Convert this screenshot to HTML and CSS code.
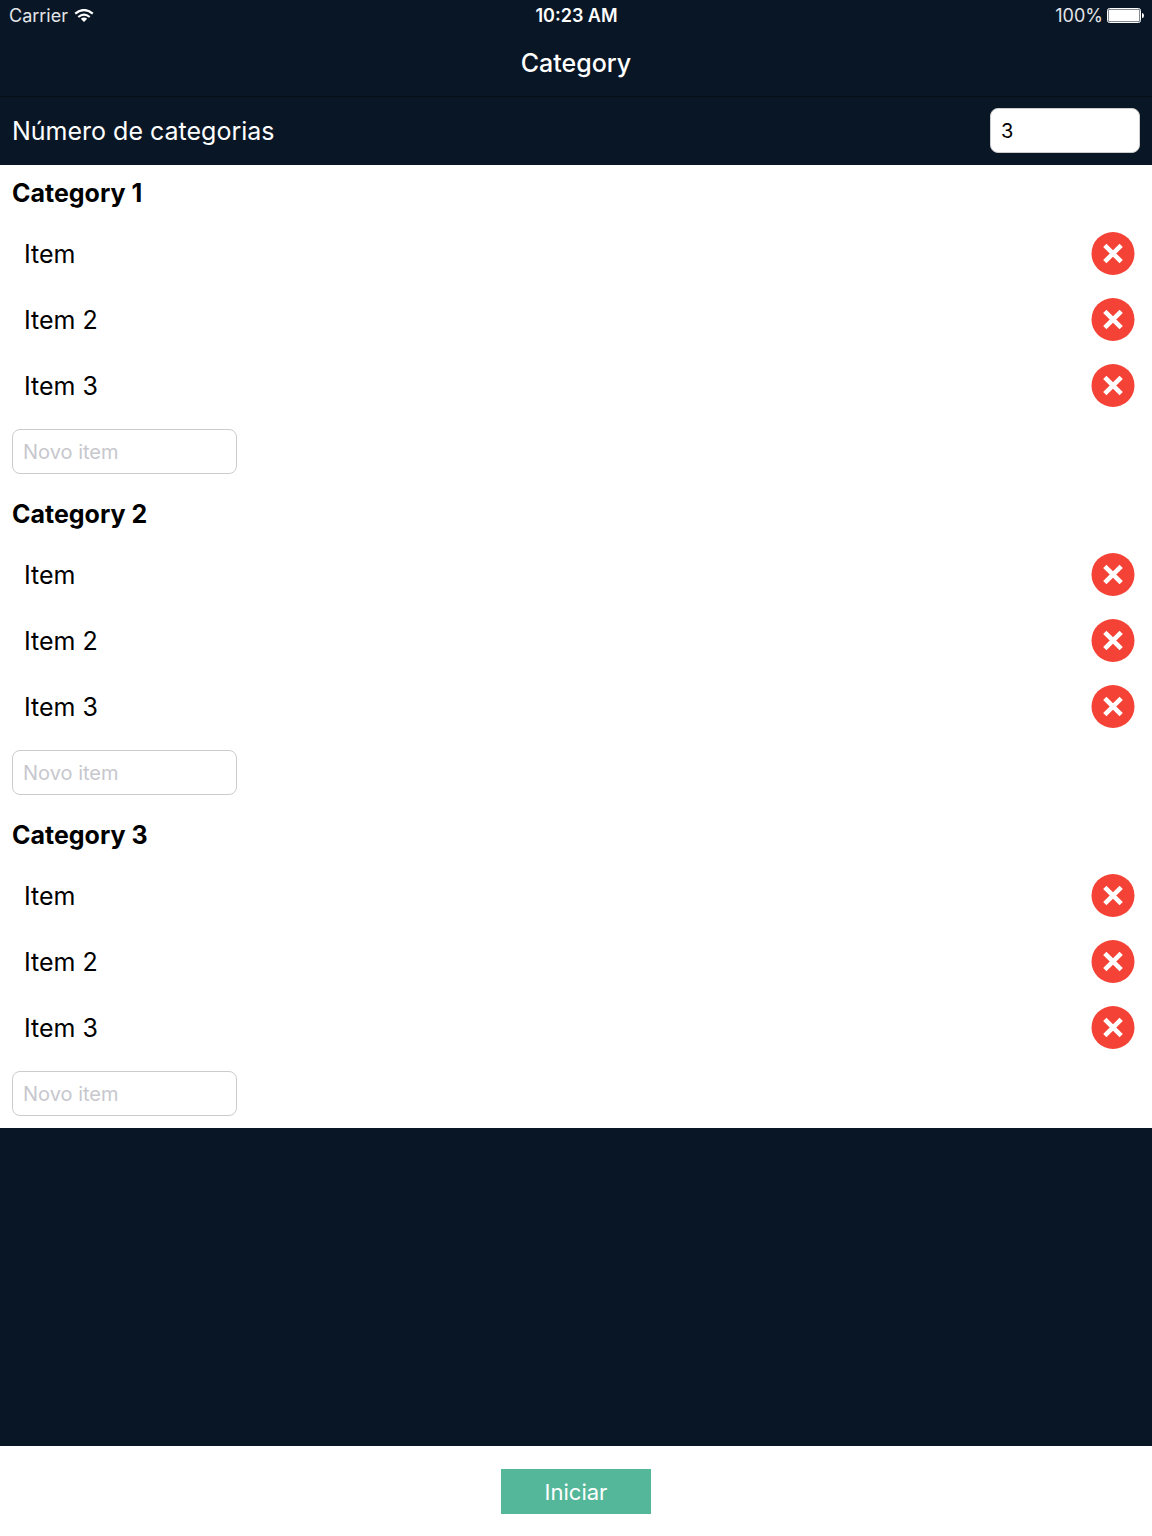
FILE: index.html
```html
<!DOCTYPE html>
<html lang="pt">
<head>
<meta charset="utf-8">
<meta name="viewport" content="width=device-width, initial-scale=1">
<title>Category</title>
<link rel="stylesheet" href="styles.css">
</head>
<body>
<svg class="symbols" aria-hidden="true">
  <symbol id="remove" viewBox="0 0 44 44">
    <circle cx="22" cy="21.500" r="21.5" fill="#f44336"/>
    <path d="M13.800 13.300 30.200 29.700M30.200 13.300 13.800 29.700" stroke="#fff" stroke-width="4.6"/>
  </symbol>
</svg>
<header class="top">
  <div class="status">
    <div class="status-side">
      <span>Carrier</span>
      <svg class="wifi" viewBox="0 0 20 14" aria-hidden="true">
        <path d="M1.2 4.600Q10-2.600 18.800 4.600M4.300 8Q10 3.400 15.700 8" fill="none" stroke="#fff" stroke-width="2.2"/>
        <path d="M6.800 9.700Q10 7.200 13.200 9.700L10 13Z" fill="#fff"/>
      </svg>
    </div>
    <span class="time">10:23 AM</span>
    <div class="status-side status-end">
      <span>100%</span>
      <svg class="battery" viewBox="0 0 37 16" aria-hidden="true">
        <rect x=".5" y=".5" width="33" height="14" rx="2" fill="none" stroke="#fff"/>
        <rect x="1.500" y="1.500" width="31" height="12" rx="1" fill="#fff"/>
        <path d="M35 5Q37 5 37 7.500T35 10Z" fill="#fff"/>
      </svg>
    </div>
  </div>
  <h1 class="title">Category</h1>
</header>
<div class="count">
  <label for="count">Número de categorias</label>
  <input class="field count-field" id="count" type="text" inputmode="numeric" value="3">
</div>
<main class="categories">
  <section class="category">
    <h2>Category 1</h2>
    <ul>
      <li><span>Item</span><button class="remove" type="button" aria-label="Remover"><svg><use href="#remove"/></svg></button></li>
      <li><span>Item 2</span><button class="remove" type="button" aria-label="Remover"><svg><use href="#remove"/></svg></button></li>
      <li><span>Item 3</span><button class="remove" type="button" aria-label="Remover"><svg><use href="#remove"/></svg></button></li>
    </ul>
    <input class="field new-item" type="text" placeholder="Novo item" aria-label="Novo item">
  </section>
  <section class="category">
    <h2>Category 2</h2>
    <ul>
      <li><span>Item</span><button class="remove" type="button" aria-label="Remover"><svg><use href="#remove"/></svg></button></li>
      <li><span>Item 2</span><button class="remove" type="button" aria-label="Remover"><svg><use href="#remove"/></svg></button></li>
      <li><span>Item 3</span><button class="remove" type="button" aria-label="Remover"><svg><use href="#remove"/></svg></button></li>
    </ul>
    <input class="field new-item" type="text" placeholder="Novo item" aria-label="Novo item">
  </section>
  <section class="category">
    <h2>Category 3</h2>
    <ul>
      <li><span>Item</span><button class="remove" type="button" aria-label="Remover"><svg><use href="#remove"/></svg></button></li>
      <li><span>Item 2</span><button class="remove" type="button" aria-label="Remover"><svg><use href="#remove"/></svg></button></li>
      <li><span>Item 3</span><button class="remove" type="button" aria-label="Remover"><svg><use href="#remove"/></svg></button></li>
    </ul>
    <input class="field new-item" type="text" placeholder="Novo item" aria-label="Novo item">
  </section>
</main>
<footer class="actions">
  <button class="start" type="button">Iniciar</button>
</footer>
</body>
</html>
```
FILE: styles.css
```css
* {
  box-sizing: border-box;
}

body {
  display: flex;
  flex-direction: column;
  min-height: 100vh;
  margin: 0;
  background: #091625;
  color: #000;
  font: 25px/32px Inter, "Liberation Sans", sans-serif;
}

.symbols {
  position: absolute;
  width: 0;
  height: 0;
}

.top {
  border-bottom: 1px solid #050d16;
  color: #fff;
}

.status {
  display: grid;
  grid-template-columns: 1fr auto 1fr;
  padding: 0 8px 0 9px;
  font-size: 18px;
}

.status-side {
  display: flex;
  align-items: center;
  gap: 6px;
  color: #e3e6e9;
}

.status-end {
  justify-content: flex-end;
  gap: 4px;
}

.time {
  font-weight: 600;
}

.wifi {
  width: 20px;
  height: 14px;
}

.battery {
  width: 37px;
  height: 16px;
}

.title {
  margin: 0;
  padding: 15px 0 17px;
  font-size: 25px;
  font-weight: 500;
  text-align: center;
}

.count {
  display: flex;
  align-items: center;
  justify-content: space-between;
  padding: 11px 12px 12px;
  color: #fff;
}

.field {
  display: block;
  height: 45px;
  padding: 0 10px;
  border: 1px solid #ccc;
  border-radius: 8px;
  background: #fff;
  color: #000;
  font: 20px/32px Inter, "Liberation Sans", sans-serif;
}

.field::placeholder {
  color: #c7c7cd;
  opacity: 1;
}

.count-field {
  width: 150px;
}

.categories {
  background: #fff;
}

.category {
  padding: 12px;
}

.category h2 {
  margin: 0 0 12px;
  font-size: 25px;
  font-weight: 700;
}

.category ul {
  margin: 0;
  padding: 0;
  list-style: none;
}

.category li {
  display: flex;
  align-items: center;
  justify-content: space-between;
  height: 66px;
  padding: 0 5px 0 12px;
}

.remove {
  width: 44px;
  height: 44px;
  padding: 0;
  border: 0;
  border-radius: 50%;
  background: none;
}

.remove svg {
  display: block;
  width: 44px;
  height: 44px;
}

.new-item {
  width: 225px;
  margin-top: 10px;
}

.actions {
  display: flex;
  justify-content: center;
  margin-top: auto;
  padding: 23px 0 22px;
  background: #fff;
}

.start {
  width: 150px;
  height: 45px;
  padding: 0;
  border: 0;
  background: #54b79a;
  color: #fff;
  font: 22px/32px Inter, "Liberation Sans", sans-serif;
}
```
